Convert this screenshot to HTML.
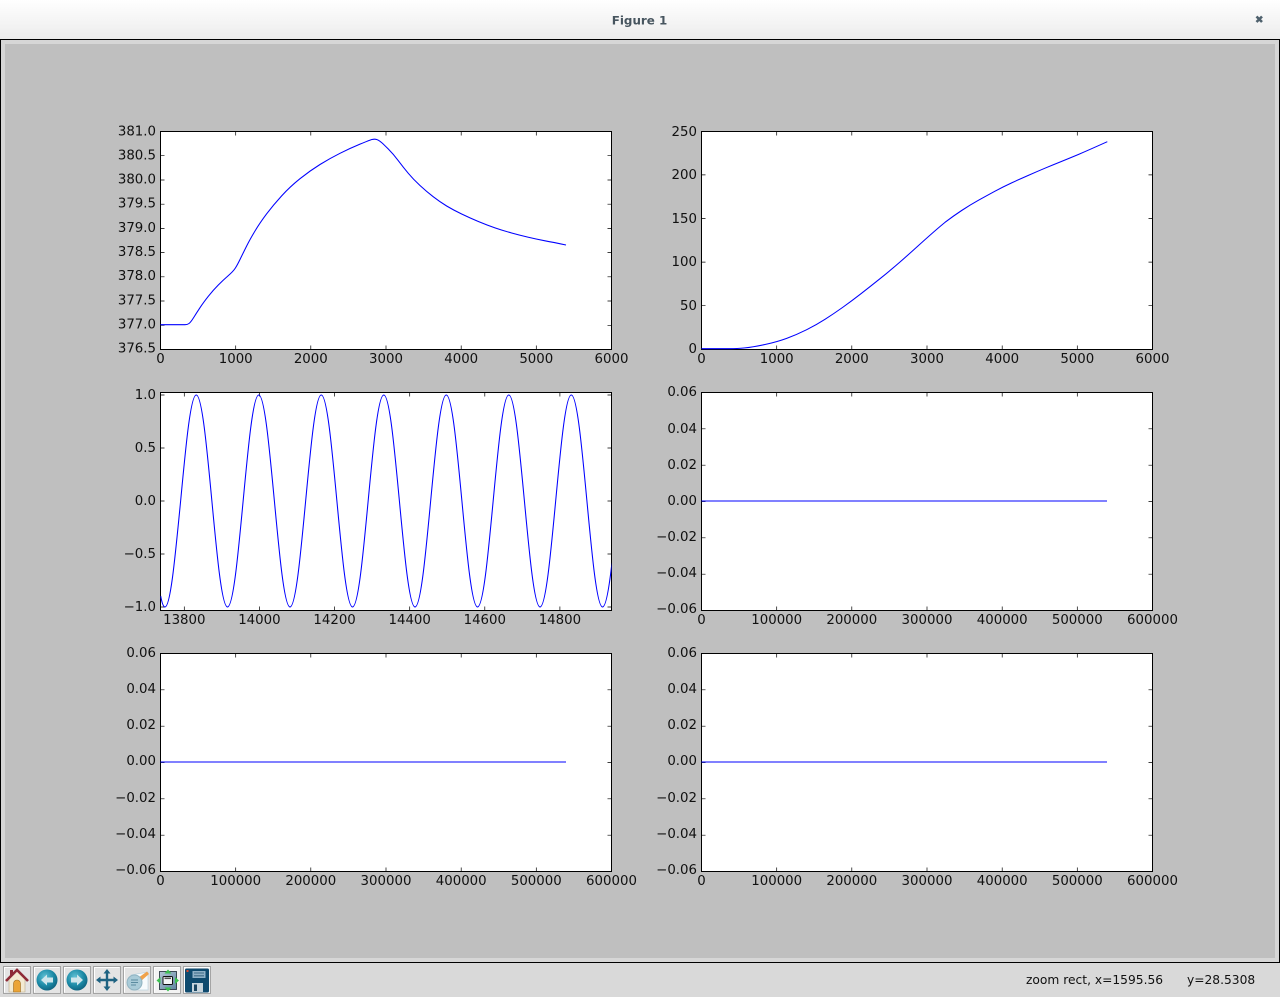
<!DOCTYPE html>
<html>
<head>
<meta charset="utf-8">
<title>Figure 1</title>
<style>
html,body{margin:0;padding:0;background:#d9d9d9;}
body{width:1280px;height:997px;overflow:hidden;position:relative;}
svg{position:absolute;left:0;top:0;display:block;}
.t{font-family:"DejaVu Sans","Liberation Sans",sans-serif;font-size:13.33px;fill:#111;}
.e{text-anchor:end;}
.m{text-anchor:middle;}
.ax{fill:#fff;stroke:#000;stroke-width:1;}
.tk{fill:none;stroke:#000;stroke-width:.7;}
.c{fill:none;stroke:#0000ff;stroke-width:1.05;stroke-linejoin:round;}
</style>
</head>
<body>
<svg width="1280" height="997" viewBox="0 0 1280 997" xmlns="http://www.w3.org/2000/svg">
<defs>
<linearGradient id="tb" x1="0" y1="0" x2="0" y2="1"><stop offset="0" stop-color="#ffffff"/><stop offset="1" stop-color="#ececec"/></linearGradient>
<radialGradient id="ball" cx=".4" cy=".35" r=".7"><stop offset="0" stop-color="#5fc0d4"/><stop offset=".6" stop-color="#1c8aa6"/><stop offset="1" stop-color="#0e5f7c"/></radialGradient>
<linearGradient id="sb" x1="0" y1="0" x2="1" y2="1"><stop offset="0" stop-color="#b5c8d6"/><stop offset="1" stop-color="#5f84a0"/></linearGradient>
<clipPath id="cp"><rect x="160.5" y="392.5" width="451" height="218"/></clipPath>
</defs>

<!-- title bar -->
<rect x="0" y="0" width="1280" height="39" fill="url(#tb)"/>
<text x="639.5" y="24.5" text-anchor="middle" style="font-family:'DejaVu Sans','Liberation Sans',sans-serif;font-size:11.9px;font-weight:bold;fill:#47555f;">Figure 1</text>
<path d="M1256.5 16.5L1262 22M1262 16.5L1256.5 22" stroke="#4f616d" stroke-width="2.6" fill="none"/>

<!-- window frame -->
<rect x="0" y="39" width="1280" height="925" fill="#000"/>
<rect x="1" y="40" width="1278" height="922" fill="#d6d6d6"/>
<rect x="5" y="44" width="1270" height="914" fill="#bfbfbf"/>
<rect x="0" y="963" width="1280" height="34" fill="#d9d9d9"/>

<!-- axes 1 -->
<rect class="ax" x="160.5" y="131.5" width="451" height="218"/>
<path class="tk" d="M235.7 131.5v4M310.8 131.5v4M386 131.5v4M461.2 131.5v4M536.3 131.5v4M235.7 349.5v-4M310.8 349.5v-4M386 349.5v-4M461.2 349.5v-4M536.3 349.5v-4M160.5 155.7h4M160.5 180h4M160.5 204.2h4M160.5 228.4h4M160.5 252.6h4M160.5 276.8h4M160.5 301h4M160.5 325.3h4M611.5 155.7h-4M611.5 180h-4M611.5 204.2h-4M611.5 228.4h-4M611.5 252.6h-4M611.5 276.8h-4M611.5 301h-4M611.5 325.3h-4"/>
<path class="c" d="M160.5 324.7L185 324.7Q187.3 324.7 189 323.5Q190.7 322.3 193.7 317.5Q196.7 312.7 200 307.7Q203.3 302.7 208.3 296.35Q213.3 290 218.3 285Q223.3 280 228.3 275.65Q233.3 271.3 235.3 268.15Q237.3 265 240.3 258.85Q243.3 252.7 246.65 246Q250 239.3 255 231Q260 222.7 266.65 213.85Q273.3 205 281.65 195.85Q290 186.7 300 178.7Q310 170.7 320 164.5Q330 158.3 340 153.3Q350 148.3 360 144.15Q370 140 372 139.5Q373.5 139.1 375 139.2Q376.7 139.3 378.3 140.2Q380 141.2 381.65 142.6Q383.3 144 388.3 149Q393.3 154 398.3 160.65Q403.3 167.3 408.3 173.3Q413.3 179.3 420 185.5Q426.7 191.7 433.35 196.85Q440 202 446.65 206Q453.3 210 461.65 214Q470 218 478.35 221.5Q486.7 225 495 227.85Q503.3 230.7 511.65 233Q520 235.3 528.35 237.3Q536.7 239.3 545 240.8Q553.3 242.3 566 245"/>
<g class="t e">
<text x="156" y="135.5">381.0</text><text x="156" y="159.5">380.5</text><text x="156" y="183.5">380.0</text><text x="156" y="207.5">379.5</text><text x="156" y="232">379.0</text><text x="156" y="256">378.5</text><text x="156" y="280">378.0</text><text x="156" y="304.5">377.5</text><text x="156" y="328.5">377.0</text><text x="156" y="352.5">376.5</text>
</g>
<g class="t m">
<text x="160.5" y="363">0</text><text x="235.7" y="363">1000</text><text x="310.8" y="363">2000</text><text x="386" y="363">3000</text><text x="461.2" y="363">4000</text><text x="536.3" y="363">5000</text><text x="611.5" y="363">6000</text>
</g>

<!-- axes 2 -->
<rect class="ax" x="701.5" y="131.5" width="451" height="218"/>
<path class="tk" d="M776.7 131.5v4M851.8 131.5v4M927 131.5v4M1002.2 131.5v4M1077.3 131.5v4M776.7 349.5v-4M851.8 349.5v-4M927 349.5v-4M1002.2 349.5v-4M1077.3 349.5v-4M701.5 174.9h4M701.5 218.5h4M701.5 262.1h4M701.5 305.7h4M1152.5 174.9h-4M1152.5 218.5h-4M1152.5 262.1h-4M1152.5 305.7h-4"/>
<path class="c" d="M701.5 348.7L730 348.7Q736.7 348.7 745 347.85Q753.3 347 765 344.5Q776.7 342 786.7 338.35Q796.7 334.7 806.7 329.7Q816.7 324.7 825 319.35Q833.3 314 842.5 307.5Q851.7 301 860.85 293.85Q870 286.7 880 278.7Q890 270.7 900 262C915 249 930 234.5 945 222.35Q953.3 216 961.65 210.5Q970 205 978.35 200.35Q986.7 195.7 995 191.2Q1003.3 186.7 1011.65 182.85Q1020 179 1028.35 175.35Q1036.7 171.7 1045 168.2Q1053.3 164.7 1061.65 161.35Q1070 158 1078.35 154.5Q1090 149.5 1107.3 141.7"/>
<g class="t e">
<text x="697" y="136">250</text><text x="697" y="179">200</text><text x="697" y="223">150</text><text x="697" y="266">100</text><text x="697" y="310">50</text><text x="697" y="353">0</text>
</g>
<g class="t m">
<text x="701.5" y="363">0</text><text x="776.7" y="363">1000</text><text x="851.8" y="363">2000</text><text x="927" y="363">3000</text><text x="1002.2" y="363">4000</text><text x="1077.3" y="363">5000</text><text x="1152.5" y="363">6000</text>
</g>

<!-- axes 3 -->
<rect class="ax" x="160.5" y="392.5" width="451" height="218"/>
<path class="tk" d="M184.3 392.5v4M259.4 392.5v4M334.6 392.5v4M409.7 392.5v4M484.8 392.5v4M559.9 392.5v4M184.3 610.5v-4M259.4 610.5v-4M334.6 610.5v-4M409.7 610.5v-4M484.8 610.5v-4M559.9 610.5v-4M160.5 395h4M160.5 448h4M160.5 501h4M160.5 554h4M160.5 607h4M611.5 395h-4M611.5 448h-4M611.5 501h-4M611.5 554h-4M611.5 607h-4"/>
<g clip-path="url(#cp)">
<path class="c" transform="translate(165 0) scale(1.003 1) translate(-164.8 0)" d="M160.5 596Q162.5 607 164.8 607c5.64 0 10.5-54.3 15.58-106
c5.08-54.3 9.94-106 15.58-106c5.64 0 10.5 51.7 15.58 106c5.08 54.3 9.94 106 15.58 106c5.64 0 10.5-51.7 15.58-106
c5.08-54.3 9.94-106 15.58-106c5.64 0 10.5 51.7 15.58 106c5.08 54.3 9.94 106 15.58 106c5.64 0 10.5-51.7 15.58-106
c5.08-54.3 9.94-106 15.58-106c5.64 0 10.5 51.7 15.58 106c5.08 54.3 9.94 106 15.58 106c5.64 0 10.5-51.7 15.58-106
c5.08-54.3 9.94-106 15.58-106c5.64 0 10.5 51.7 15.58 106c5.08 54.3 9.94 106 15.58 106c5.64 0 10.5-51.7 15.58-106
c5.08-54.3 9.94-106 15.58-106c5.64 0 10.5 51.7 15.58 106c5.08 54.3 9.94 106 15.58 106c5.64 0 10.5-51.7 15.58-106
c5.08-54.3 9.94-106 15.58-106c5.64 0 10.5 51.7 15.58 106c5.08 54.3 9.94 106 15.58 106c5.64 0 10.5-51.7 15.58-106
c5.08-54.3 9.94-106 15.58-106c5.64 0 10.5 51.7 15.58 106c5.08 54.3 9.94 106 15.58 106c5.64 0 10.5-51.7 15.58-106"/>
</g>
<g class="t e">
<text x="156" y="399">1.0</text><text x="156" y="452">0.5</text><text x="156" y="505">0.0</text><text x="156" y="558">−0.5</text><text x="156" y="611">−1.0</text>
</g>
<g class="t m">
<text x="184.3" y="624">13800</text><text x="259.4" y="624">14000</text><text x="334.6" y="624">14200</text><text x="409.7" y="624">14400</text><text x="484.8" y="624">14600</text><text x="559.9" y="624">14800</text>
</g>

<!-- axes 4 -->
<rect class="ax" x="701.5" y="392.5" width="451" height="218"/>
<path class="tk" d="M776.7 392.5v4M851.8 392.5v4M927 392.5v4M1002.2 392.5v4M1077.3 392.5v4M776.7 610.5v-4M851.8 610.5v-4M927 610.5v-4M1002.2 610.5v-4M1077.3 610.5v-4M701.5 428.8h4M701.5 465.2h4M701.5 501.5h4M701.5 537.8h4M701.5 574.2h4M1152.5 428.8h-4M1152.5 465.2h-4M1152.5 501.5h-4M1152.5 537.8h-4M1152.5 574.2h-4"/>
<path class="c" d="M701.5 501H1107"/>
<g class="t e">
<text x="697" y="396">0.06</text><text x="697" y="433">0.04</text><text x="697" y="469">0.02</text><text x="697" y="505">0.00</text><text x="697" y="541">−0.02</text><text x="697" y="577">−0.04</text><text x="697" y="613">−0.06</text>
</g>
<g class="t m">
<text x="701.5" y="624">0</text><text x="776.7" y="624">100000</text><text x="851.8" y="624">200000</text><text x="927" y="624">300000</text><text x="1002.2" y="624">400000</text><text x="1077.3" y="624">500000</text><text x="1152.5" y="624">600000</text>
</g>

<!-- axes 5 -->
<rect class="ax" x="160.5" y="653.5" width="451" height="218"/>
<path class="tk" d="M235.7 653.5v4M310.8 653.5v4M386 653.5v4M461.2 653.5v4M536.3 653.5v4M235.7 871.5v-4M310.8 871.5v-4M386 871.5v-4M461.2 871.5v-4M536.3 871.5v-4M160.5 689.8h4M160.5 726.2h4M160.5 762.5h4M160.5 798.8h4M160.5 835.2h4M611.5 689.8h-4M611.5 726.2h-4M611.5 762.5h-4M611.5 798.8h-4M611.5 835.2h-4"/>
<path class="c" d="M160.5 762H566"/>
<g class="t e">
<text x="156" y="657">0.06</text><text x="156" y="693">0.04</text><text x="156" y="729">0.02</text><text x="156" y="765">0.00</text><text x="156" y="802">−0.02</text><text x="156" y="838">−0.04</text><text x="156" y="874">−0.06</text>
</g>
<g class="t m">
<text x="160.5" y="885">0</text><text x="235.7" y="885">100000</text><text x="310.8" y="885">200000</text><text x="386" y="885">300000</text><text x="461.2" y="885">400000</text><text x="536.3" y="885">500000</text><text x="611.5" y="885">600000</text>
</g>

<!-- axes 6 -->
<rect class="ax" x="701.5" y="653.5" width="451" height="218"/>
<path class="tk" d="M776.7 653.5v4M851.8 653.5v4M927 653.5v4M1002.2 653.5v4M1077.3 653.5v4M776.7 871.5v-4M851.8 871.5v-4M927 871.5v-4M1002.2 871.5v-4M1077.3 871.5v-4M701.5 689.8h4M701.5 726.2h4M701.5 762.5h4M701.5 798.8h4M701.5 835.2h4M1152.5 689.8h-4M1152.5 726.2h-4M1152.5 762.5h-4M1152.5 798.8h-4M1152.5 835.2h-4"/>
<path class="c" d="M701.5 762H1107"/>
<g class="t e">
<text x="697" y="657">0.06</text><text x="697" y="693">0.04</text><text x="697" y="729">0.02</text><text x="697" y="765">0.00</text><text x="697" y="802">−0.02</text><text x="697" y="838">−0.04</text><text x="697" y="874">−0.06</text>
</g>
<g class="t m">
<text x="701.5" y="885">0</text><text x="776.7" y="885">100000</text><text x="851.8" y="885">200000</text><text x="927" y="885">300000</text><text x="1002.2" y="885">400000</text><text x="1077.3" y="885">500000</text><text x="1152.5" y="885">600000</text>
</g>

<!-- toolbar buttons -->
<g fill="#e4e4e4" stroke="#a4a4a4">
<path d="M3.5 966.5h27v27h-27z"/><path d="M33.5 966.5h27v27h-27z"/><path d="M63.5 966.5h27v27h-27z"/><path d="M93.5 966.5h27v27h-27z"/><path d="M123.5 966.5h27v27h-27z"/><path d="M153.5 966.5h27v27h-27z" fill="#f3f3f3"/><path d="M183.5 966.5h27v27h-27z" fill="#f3f3f3"/>
</g>
<g fill="none" stroke="#fff">
<path d="M4.5 992.5v-25h25"/><path d="M34.5 992.5v-25h25"/><path d="M64.5 992.5v-25h25"/><path d="M94.5 992.5v-25h25"/><path d="M124.5 992.5v-25h25"/><path d="M154.5 992.5v-25h25"/><path d="M184.5 992.5v-25h25"/>
</g>

<!-- home -->
<path d="M9 978V992H25V978L17 971Z" fill="#f3ead2" stroke="#b9a98a" stroke-width=".6"/>
<path d="M13.5 992V983.5a3.5 3.5 0 0 1 7 0V992Z" fill="#eba436" stroke="#9a6a22" stroke-width=".6"/>
<path d="M6 981L17 970L28 981" fill="none" stroke="#8e2b37" stroke-width="2.6"/>
<rect x="10" y="970" width="3" height="5.5" fill="#8e2b37"/>

<!-- back -->
<circle cx="47" cy="980" r="10.5" fill="url(#ball)"/>
<path d="M41 980L47 974.5V977.5H53V982.5H47V985.5Z" fill="#cfe6ec"/>

<!-- forward -->
<circle cx="77" cy="980" r="10.5" fill="url(#ball)"/>
<path d="M83 980L77 974.5V977.5H71V982.5H77V985.5Z" fill="#cfe6ec"/>

<!-- pan -->
<path d="M107 969L110.5 973.5H108.2V978.8H113.5V976.5L118 980L113.5 983.5V981.2H108.2V986.5H110.5L107 991L103.5 986.5H105.8V981.2H100.5V983.5L96 980L100.5 976.5V978.8H105.8V973.5H103.5Z" fill="#1f6382"/>

<!-- zoom rect -->
<path d="M131 975L148 972V990H131Z" fill="#f7fbfd" stroke="#bcd4e0" stroke-width=".7"/>
<path d="M138 978L147 971.5L149 974L141 981Z" fill="#f0a24a"/>
<circle cx="134.5" cy="982.5" r="7.5" fill="#a9cbd8" stroke="#8fb2c0"/>
<path d="M131 980h7M131 982.5h7M131 985h5" stroke="#5a8ba0" stroke-width="1"/>

<!-- subplots -->
<rect x="159.5" y="971.5" width="17" height="18" fill="url(#sb)" stroke="#1d2a33" stroke-width=".8"/>
<rect x="163" y="976.5" width="9.5" height="8" rx="1" fill="#f4f6f7" stroke="#111"/>
<rect x="164.5" y="977.5" width="6.5" height="1.6" fill="#555"/>
<path d="M168 969.5L171.5 973.5H164.5ZM168 991.5L171.5 987.5H164.5ZM156.5 980.5L160.5 977V984ZM179 980.5L175 977V984Z" fill="#3cc050"/>

<!-- save -->
<rect x="185" y="968.5" width="24" height="24" rx="1.5" fill="#0f4a6e"/>
<rect x="192.5" y="971" width="13" height="7" fill="#8fb0c6"/>
<path d="M194 973h10M194 975.8h10" stroke="#3e6a86" stroke-width="1.1"/>
<rect x="192" y="983" width="11" height="9" fill="#c7d4dc"/>
<rect x="194" y="984.5" width="3" height="6.5" fill="#1c4560"/>
<rect x="186.5" y="970" width="2" height="2" fill="#d9472b"/>

<!-- status -->
<text x="1026" y="984" style="font-family:'DejaVu Sans','Liberation Sans',sans-serif;font-size:12.25px;fill:#111;">zoom rect, x=1595.56</text>
<text x="1187" y="984" style="font-family:'DejaVu Sans','Liberation Sans',sans-serif;font-size:12.25px;fill:#111;">y=28.5308</text>
</svg>
</body>
</html>
